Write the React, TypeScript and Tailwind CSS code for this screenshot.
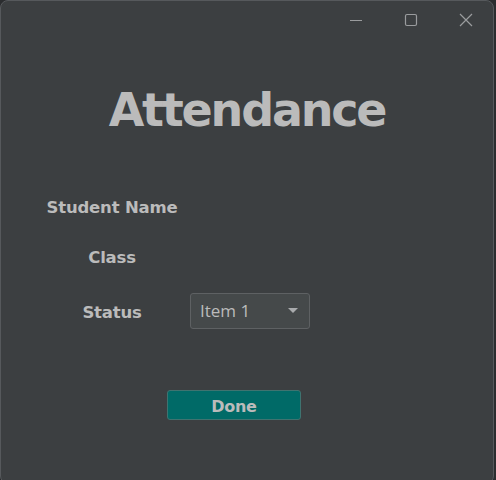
import React from 'react'

function TitleBar() {
  return (
    <div className="flex h-[38px] justify-end">
      <button className="flex w-[55px] items-center justify-center">
        <svg width="14" height="14" viewBox="0 0 14 14" fill="none" stroke="#9a9c9e" strokeWidth="1">
          <path d="M1 7.5h12" />
        </svg>
      </button>
      <button className="flex w-[55px] items-center justify-center">
        <svg width="14" height="14" viewBox="0 0 14 14" fill="none" stroke="#9a9c9e" strokeWidth="1.2">
          <rect x="1.5" y="1.5" width="11" height="11" rx="1.5" />
        </svg>
      </button>
      <button className="flex w-[55px] items-center justify-center">
        <svg width="14" height="14" viewBox="0 0 14 14" fill="none" stroke="#9a9c9e" strokeWidth="1.2">
          <path d="M1 1l12 12M13 1L1 13" />
        </svg>
      </button>
    </div>
  )
}

export default function App() {
  const label = "mt-[4px] w-[142px] text-center text-[16.5px] font-bold text-[#bbbbbb] [font-family:'DejaVu_Sans',sans-serif] tracking-[-0.2px]"
  return (
    <div className="h-[480px] w-[496px] overflow-hidden bg-[#2b2d2f]">
      <div className="h-[484px] w-[494px] rounded-[8px] border border-[#56595c] bg-[#3c3f41]">
        <TitleBar />
        <h1 className="mt-[43px] text-center text-[46px] leading-[56px] font-bold text-[#bbbbbb] [font-family:'DejaVu_Sans',sans-serif] tracking-[-2.2px]">
          Attendance
        </h1>
        <div className="mt-[50px] ml-[40px] flex flex-col">
          <div className="flex h-[36px] items-center">
            <span className={label}>Student Name</span>
          </div>
          <div className="mt-[14px] flex h-[36px] items-center">
            <span className={label}>Class</span>
          </div>
          <div className="mt-[19px] flex h-[36px] items-center">
            <span className={label}>Status</span>
            <div className="ml-[7px] flex h-[36px] w-[120px] items-center justify-between rounded-[3px] border border-[#5e6163] bg-[#45494a] pr-[11px] pl-[9px]">
              <span className="text-[17px] text-[#bbbbbb] [font-family:'Open_Sans',sans-serif]">Item 1</span>
              <svg width="10" height="6" viewBox="0 0 10 6">
                <path d="M0 0h10L5 5z" fill="#a9abad" />
              </svg>
            </div>
          </div>
        </div>
        <div className="mt-[61px] flex justify-center pr-[26px]">
          <button className="flex h-[30px] w-[134px] items-center justify-center rounded-[3px] border border-[#3f7370] bg-[#006a67] pt-[3px] text-[16px] font-bold text-[#bbbbbb] [font-family:'DejaVu_Sans',sans-serif] tracking-[-0.3px]">
            Done
          </button>
        </div>
      </div>
    </div>
  )
}
